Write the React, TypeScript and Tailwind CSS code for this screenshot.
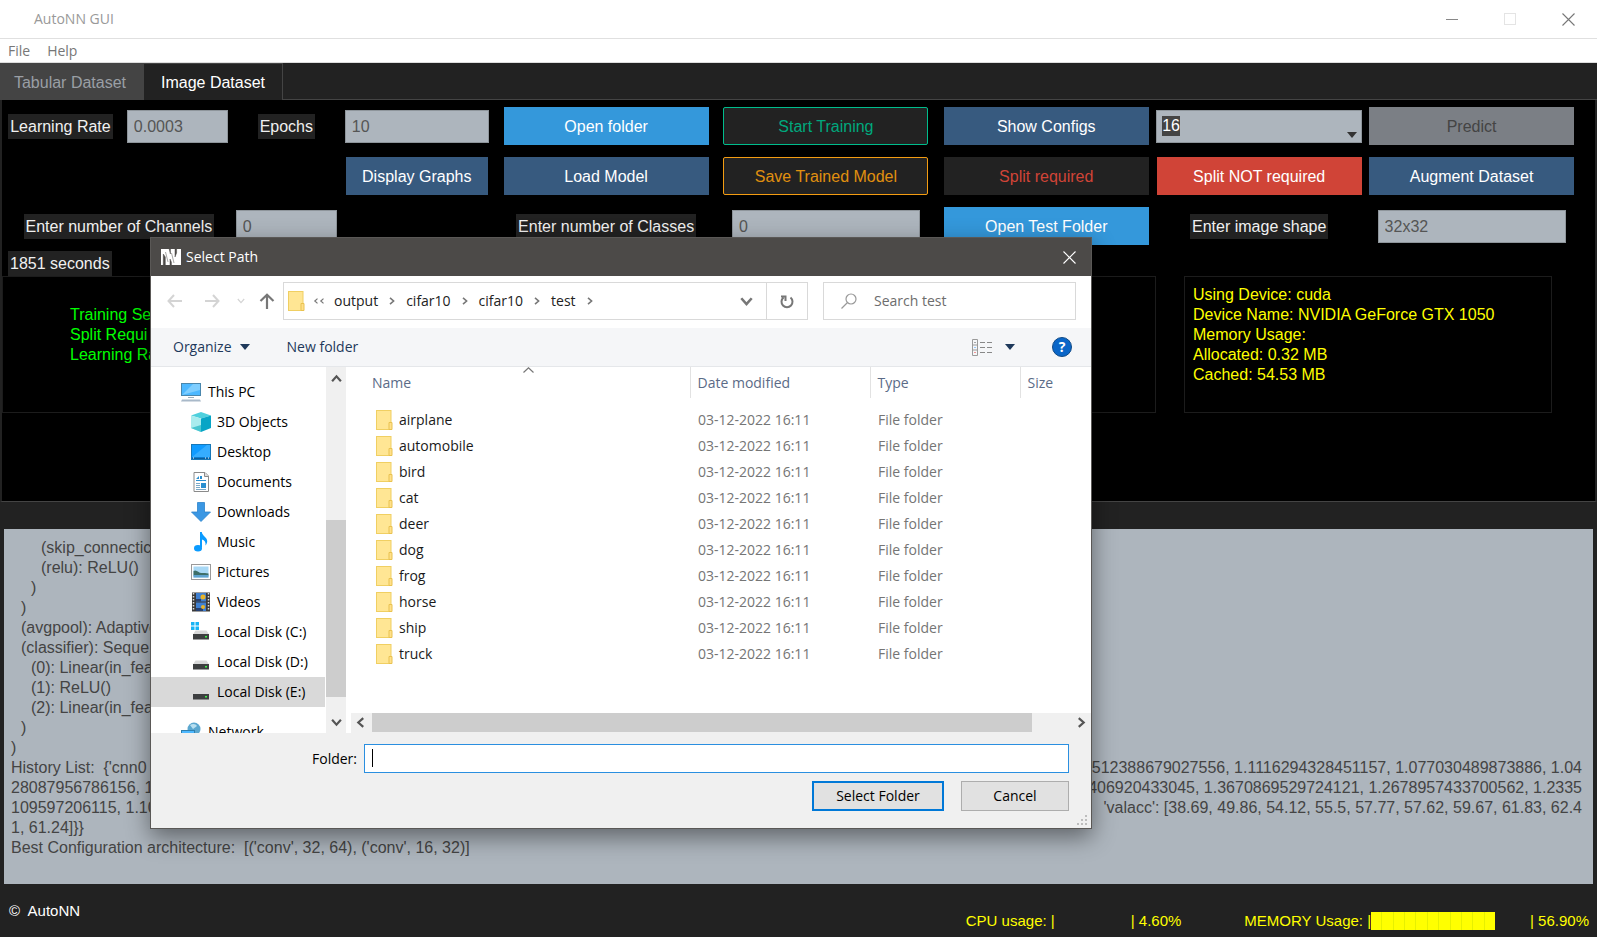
import React from "react";

const FOLDERS = ["airplane", "automobile", "bird", "cat", "deer", "dog", "frog", "horse", "ship", "truck"];

const btn = "h-[38px] w-[205px] pt-0.5 text-base";
const field = "h-[33px] border border-[#8e959b] bg-[#adb5bd] px-1.5 pt-0.5 text-base text-[#555] outline-none";
const tag = "h-[25px] bg-[#222] px-0.5 text-base leading-[25px] whitespace-nowrap text-[#f0f0f0]";

function Chevron({ dir, size = 10, color = "#555", weight = 2 }: { dir: "up" | "down" | "left" | "right"; size?: number; color?: string; weight?: number }) {
  const d = {
    up: "M1 7.5 L5 3 L9 7.5",
    down: "M1 2.5 L5 7 L9 2.5",
    left: "M7.5 1 L3 5 L7.5 9",
    right: "M2.5 1 L7 5 L2.5 9",
  }[dir];
  return (
    <svg className="shrink-0" width={size} height={size} viewBox="0 0 10 10" fill="none" stroke={color} strokeWidth={weight}>
      <path d={d} />
    </svg>
  );
}

function Triangle({ color }: { color: string }) {
  return (
    <svg width="10" height="6" viewBox="0 0 10 6" fill={color}>
      <path d="M0 0H10L5 6Z" />
    </svg>
  );
}

function CloseIcon({ color }: { color: string }) {
  return (
    <svg width="13" height="13" viewBox="0 0 13 13" stroke={color} strokeWidth="1.1">
      <path d="M.5 .5L12.5 12.5M12.5 .5L.5 12.5" />
    </svg>
  );
}

function FolderIcon() {
  return (
    <svg className="shrink-0" width="17" height="20" viewBox="0 0 17 20">
      <rect x=".5" y=".5" width="14.5" height="19" fill="#ffe694" stroke="#f0cf62" />
      <path d="M13 12.5h3v7h-3z" fill="#ffe08a" stroke="#e9c250" />
    </svg>
  );
}

function SideIcon({ name }: { name: string }) {
  switch (name) {
    case "pc":
      return (
        <svg className="shrink-0" width="20" height="20" viewBox="0 0 20 20">
          <rect x=".5" y="1.5" width="19" height="12" fill="#4db8ff" stroke="#4a87ad" />
          <path d="M1 13L12 2h7v6z" fill="#7fceff" />
          <path d="M7 15h6v1H7z" fill="#9aaebb" />
          <path d="M1 17.5h18l1 2H0z" fill="#a9b9c9" />
        </svg>
      );
    case "3d":
      return (
        <svg className="shrink-0" width="20" height="20" viewBox="0 0 20 20">
          <path d="M10 0L20 3.5L10 6.5L0 3.5Z" fill="#4fd0dd" />
          <path d="M0 3.5L10 6.5V20L0 16Z" fill="#a9ecee" />
          <path d="M20 3.5L10 6.5V20L20 16Z" fill="#08a5c6" />
          <path d="M0 16L10 13V20Z" fill="#49c6d0" />
        </svg>
      );
    case "desktop":
      return (
        <svg className="shrink-0" width="20" height="20" viewBox="0 0 20 20">
          <rect x=".5" y="2.5" width="19" height="15" fill="#0f9bff" stroke="#1778b8" />
          <path d="M1 15L16 3h3v12z" fill="#35adff" />
          <path d="M1 15.5h18v1.5H1z" fill="#0a5f9e" />
          <path d="M2 16h1M14 16h1M17 16h1" stroke="#fff" />
        </svg>
      );
    case "documents":
      return (
        <svg className="shrink-0" width="20" height="20" viewBox="0 0 20 20">
          <path d="M3 .5h11l3.500 3.500v15.500H3z" fill="#fff" stroke="#8a8a8a" />
          <path d="M13.500 .5v4h4" fill="#ddd" stroke="#8a8a8a" />
          <path d="M5 7l3-3v3zM9 4h2v3H9zM5 8h10v1H5zM10 11h5v5h-5z" fill="#2a8fd0" />
          <path d="M5 11.500h4M5 13.500h4M5 15.500h4M5 17.500h10" stroke="#7aa9c8" />
        </svg>
      );
    case "downloads":
      return (
        <svg className="shrink-0" width="20" height="20" viewBox="0 0 20 20">
          <path d="M6.500 .5h7v9.500h6L10 19.500L.5 10h6z" fill="#3b97e3" stroke="#2c83cc" strokeWidth=".8" />
        </svg>
      );
    case "music":
      return (
        <svg className="shrink-0" width="20" height="20" viewBox="0 0 20 20" fill="#0a9bff">
          <path d="M9 0h1.800c.4 4 5.700 5.200 5.400 9.500-.1 1.900-.9 3.100-1.700 4 .5-3.500-.9-5.500-3.500-6V15.500H9z" />
          <ellipse cx="7" cy="16.300" rx="4" ry="3.300" />
        </svg>
      );
    case "pictures":
      return (
        <svg className="shrink-0" width="20" height="20" viewBox="0 0 20 20">
          <rect x=".5" y="2.500" width="19" height="15" fill="#fff" stroke="#9a9a9a" />
          <rect x="2.500" y="4.500" width="15" height="11" fill="#a8d8f5" />
          <path d="M2.500 9c3-2 5 2 8 2s4 0 7 .5v2H2.500z" fill="#3e6f68" />
          <path d="M2.500 13h15v2.500h-15z" fill="#5fa3cf" />
        </svg>
      );
    case "videos":
      return (
        <svg className="shrink-0" width="20" height="20" viewBox="0 0 20 20">
          <rect x="1" y=".5" width="18" height="19" fill="#3a3a3a" />
          <path d="M2.500 1v18M17.500 1v18" stroke="#ddd" strokeWidth="1.500" strokeDasharray="1.500 1.500" />
          <rect x="5" y="1" width="10" height="8.500" fill="#3f7fd0" />
          <rect x="5" y="10.500" width="10" height="8.500" fill="#3f7fd0" />
          <path d="M5 7h5v2.500H5zM5 16h7v3H5z" fill="#27406e" />
          <circle cx="12" cy="5" r="2.500" fill="#e9b429" />
          <circle cx="12" cy="15" r="2" fill="#e9b429" />
        </svg>
      );
    case "network":
      return (
        <svg className="shrink-0" width="20" height="20" viewBox="0 0 20 20">
          <circle cx="13" cy="7" r="6.500" fill="#5ba7cf" />
          <path d="M9 3c3-2 6-1 7 1l-4 3z" fill="#b8dff0" />
          <rect x=".5" y="8.500" width="13" height="9" fill="#4db8ff" stroke="#2f7fae" />
        </svg>
      );
    default:
      return (
        <svg className="shrink-0" width="20" height="20" viewBox="0 0 20 20">
          {name === "disk-c" && <path d="M0 0h3.500v3.500H0zM4.500 0h3.500v3.500H4.500zM0 4.500h3.500v3.500H0zM4.500 4.500h3.500v3.500H4.500z" fill="#18b4f5" />}
          <path d="M4.500 8.500h11L18 12.500H2z" fill="#d9d9d9" />
          <rect x="2" y="12" width="16" height="5.500" fill="#3d3f40" />
          <rect x="14" y="14" width="2" height="1.500" fill="#3df04a" />
        </svg>
      );
  }
}

const PLACES = [
  ["3d", "3D Objects"],
  ["desktop", "Desktop"],
  ["documents", "Documents"],
  ["downloads", "Downloads"],
  ["music", "Music"],
  ["pictures", "Pictures"],
  ["videos", "Videos"],
  ["disk-c", "Local Disk (C:)"],
  ["disk", "Local Disk (D:)"],
  ["disk", "Local Disk (E:)"],
];

function Controls() {
  return (
    <div className="mr-[14px] grid auto-rows-[50px] grid-cols-[117fr_117fr_101fr_160fr_219fr_221fr_220fr_205fr_219fr] place-items-center">
      <label htmlFor="lr" className={tag}>Learning Rate</label>
      <input id="lr" defaultValue="0.0003" className={`${field} w-[101px]`} />
      <label htmlFor="epochs" className={tag}>Epochs</label>
      <input id="epochs" defaultValue="10" className={`${field} w-36`} />
      <button className={`${btn} bg-[#3498db] text-white`}>Open folder</button>
      <button className={`${btn} rounded-xs border border-[#00bc8c] bg-[#222] text-[#00a87d]`}>Start Training</button>
      <button className={`${btn} bg-[#375a7f] text-white`}>Show Configs</button>
      <div className="relative flex h-[33px] w-[206px] items-center border border-[#8e959b] bg-[#adb5bd] px-[5px]">
        <select aria-label="Batch size" className="h-5 w-[18px] appearance-none bg-[#444] text-base leading-5 text-white outline-none">
          <option>16</option>
        </select>
        <span className="pointer-events-none absolute right-1 bottom-1">
          <Triangle color="#333" />
        </span>
      </div>
      <button className={`${btn} bg-[#7b7f85] text-[#444]`}>Predict</button>

      <button className="col-start-4 h-[38px] w-[142px] bg-[#375a7f] pt-0.5 text-base text-white">Display Graphs</button>
      <button className={`${btn} bg-[#375a7f] text-white`}>Load Model</button>
      <button className={`${btn} rounded-xs border border-[#f39c12] bg-[#222] text-[#e0900f]`}>Save Trained Model</button>
      <button className={`${btn} bg-[#222] text-[#d04437]`}>Split required</button>
      <button className={`${btn} bg-[#d04437] text-white`}>Split NOT required</button>
      <button className={`${btn} bg-[#375a7f] text-white`}>Augment Dataset</button>

      <label htmlFor="channels" className={`${tag} col-span-2`}>Enter number of Channels</label>
      <input id="channels" defaultValue="0" className={`${field} w-[101px]`} />
      <label htmlFor="classes" className={`${tag} col-start-5`}>Enter number of Classes</label>
      <input id="classes" defaultValue="0" className={`${field} w-[188px]`} />
      <button className={`${btn} bg-[#3498db] text-white`}>Open Test Folder</button>
      <label htmlFor="shape" className={tag}>Enter image shape</label>
      <input id="shape" defaultValue="32x32" className={`${field} w-[188px]`} />
    </div>
  );
}

function LogRow({ start, end }: { start: string; end: string }) {
  return (
    <div className="flex justify-between whitespace-pre">
      <span>{start}</span>
      <span>{end}</span>
    </div>
  );
}

function Crumb({ children }: { children: React.ReactNode }) {
  return (
    <>
      <button className="text-[#222]">{children}</button>
      <Chevron dir="right" size={8} color="#777" />
    </>
  );
}

function PathDialog() {
  return (
    <div role="dialog" aria-label="Select Path" className="absolute top-[237px] left-[150px] w-[942px] border border-[#5a5856] bg-white font-['Open_Sans','Noto_Sans',sans-serif] text-sm text-black shadow-[0_8px_22px_rgba(0,0,0,0.45)]">
      <div className="flex h-[38px] items-center bg-[#4c4a48] pr-[15px] pl-2.5 text-white">
        <svg width="20" height="16" viewBox="0 0 20 16">
          <path d="M0 0H20V16H0Z" fill="#fff" />
          <path d="M2.300 5V16H4.300V8ZM8.200 0L9.400 5V0ZM9 10V16H10.400V13ZM14 0V8L15.600 4V0ZM4.500 3L7 13M10.500 4L13 14" fill="#4c4a48" stroke="#4c4a48" strokeWidth=".5" />
        </svg>
        <span className="ml-[5px] grow">Select Path</span>
        <button aria-label="Close">
          <CloseIcon color="#fff" />
        </button>
      </div>

      <div className="flex h-[52px] items-center pr-[15px] pb-0.5 pl-4">
        <svg className="shrink-0" width="16" height="14" viewBox="0 0 16 14" fill="none" stroke="#d4d4d4" strokeWidth="2">
          <path d="M7 1L1.500 7L7 13M1.500 7H15" />
        </svg>
        <svg className="ml-[21px] shrink-0" width="16" height="14" viewBox="0 0 16 14" fill="none" stroke="#d4d4d4" strokeWidth="2">
          <path d="M9 1L14.500 7L9 13M14.500 7H1" />
        </svg>
        <span className="ml-[17px]">
          <Chevron dir="down" size={8} color="#d4d4d4" weight={1.5} />
        </span>
        <svg className="ml-[14px] shrink-0" width="16" height="16" viewBox="0 0 16 16" fill="none" stroke="#777" strokeWidth="2.200">
          <path d="M1.500 8L8 1.800L14.500 8M8 2V16" />
        </svg>
        <div className="ml-2 flex h-[38px] w-[525px] shrink-0 items-center border border-[#d9d9d9] pl-1">
          <FolderIcon />
          <span className="ml-2 flex">
            <Chevron dir="left" size={6} color="#777" />
            <Chevron dir="left" size={6} color="#777" />
          </span>
          <div className="ml-[9px] flex grow items-center gap-2.5">
            <Crumb>output</Crumb>
            <Crumb>cifar10</Crumb>
            <Crumb>cifar10</Crumb>
            <Crumb>test</Crumb>
          </div>
          <Chevron dir="down" size={13} color="#777" weight={2} />
          <button aria-label="Refresh" className="ml-[13px] flex h-9 w-[41px] items-center justify-center border-l border-[#d9d9d9]">
            <svg width="14" height="15" viewBox="0 0 14 15" fill="none" stroke="#777" strokeWidth="2">
              <path d="M10.500 3.500A5.500 5.500 0 1 1 3.500 3.500M1 2.500H5.500V7" />
            </svg>
          </button>
        </div>
        <div className="ml-[15px] flex h-[38px] min-w-0 grow items-center border border-[#d9d9d9] pl-[17px]">
          <svg className="shrink-0" width="16" height="16" viewBox="0 0 16 16" fill="none" stroke="#999" strokeWidth="1.200">
            <circle cx="10" cy="6" r="5" />
            <path d="M6.500 9.500L.5 15.500" />
          </svg>
          <input aria-label="Search test" placeholder="Search test" className="ml-[17px] w-36 outline-none placeholder:text-[#6d6d6d]" />
        </div>
      </div>

      <div className="flex h-[39px] items-center border-b border-[#e5e7ea] bg-[#f5f6f8] pr-[19px] pl-[22px] text-[#1e395b]">
        <button className="flex items-center gap-2">
          Organize <Triangle color="#1e395b" />
        </button>
        <button className="ml-[37px]">New folder</button>
        <span className="grow" />
        <svg width="21" height="17" viewBox="0 0 21 17" fill="none">
          <path d="M.5 .5h5v16h-5zM.5 6h5M.5 11h5" stroke="#9a9a9a" />
          <path d="M8 3.500h5M15 3.500h5M8 8.500h5M15 8.500h5M8 13.500h5M15 13.500h5" stroke="#888" />
          <path d="M2.500 3.500h1" stroke="#555" />
          <path d="M2.500 8.500h1" stroke="#39f" />
          <path d="M2.500 13.500h1" stroke="#e33" />
        </svg>
        <span className="ml-3">
          <Triangle color="#1e395b" />
        </span>
        <button aria-label="Help" className="ml-[37px] flex size-5 items-center justify-center rounded-full border border-[#114a86] bg-[#0a66c8] font-bold text-white">?</button>
      </div>

      <div className="flex h-[366px]">
        <nav aria-label="Places" className="w-[175px] shrink-0 overflow-hidden pt-2.5">
          <button className="flex h-[30px] w-[174px] items-center gap-[7px] pl-[30px] text-left">
            <SideIcon name="pc" /> This PC
          </button>
          {PLACES.map(([icon, label]) => (
            <button
              key={label}
              className={`flex h-[30px] w-[174px] items-center gap-1.5 pl-10 text-left whitespace-nowrap ${label.includes("(E:)") ? "bg-[#d9d9d9]" : ""}`}
            >
              <SideIcon name={icon} /> {label}
            </button>
          ))}
          <button className="mt-2.5 flex h-[30px] w-[174px] items-center gap-[7px] pl-[30px] text-left">
            <SideIcon name="network" /> Network
          </button>
        </nav>
        <div className="flex w-5 shrink-0 flex-col items-center bg-[#f0f0f0]">
          <span className="flex h-[22px] items-center">
            <Chevron dir="up" size={11} />
          </span>
          <span className="mt-[131px] h-[177px] w-full bg-[#cdcdcd]" />
          <span className="mt-auto flex h-[22px] items-center">
            <Chevron dir="down" size={11} />
          </span>
        </div>
        <div className="relative flex min-w-0 grow flex-col">
          <table className="w-full table-fixed text-left">
            <colgroup>
              <col className="w-[344px]" />
              <col className="w-[180px]" />
              <col className="w-[150px]" />
              <col />
            </colgroup>
            <thead className="text-[#5b6b87]">
              <tr className="h-[31px]">
                <th className="pl-[26px] font-normal">Name</th>
                <th className="border-l border-[#e2e2e2] pl-[7px] font-normal">Date modified</th>
                <th className="border-l border-[#e2e2e2] pl-[7px] font-normal">Type</th>
                <th className="border-l border-[#e2e2e2] pl-[7px] font-normal">Size</th>
              </tr>
            </thead>
            <tbody className="text-[#757575] before:block before:h-[9px] before:content-['']">
              {FOLDERS.map((name) => (
                <tr key={name} className="h-[26px]">
                  <td className="p-0 pl-[30px] text-[#1a1a1a]">
                    <span className="flex items-center gap-1.5">
                      <FolderIcon /> {name}
                    </span>
                  </td>
                  <td className="p-0 pl-2">03-12-2022 16:11</td>
                  <td className="p-0 pl-2">File folder</td>
                  <td />
                </tr>
              ))}
            </tbody>
          </table>
          <span className="absolute top-0 left-[177px]">
            <svg width="11" height="6" viewBox="0 0 11 6" fill="none" stroke="#777" strokeWidth="1.200">
              <path d="M.5 5.500L5.500 .8L10.500 5.500" />
            </svg>
          </span>
          <div className="mt-auto ml-[5px] flex h-5 items-start bg-[#f0f0f0]">
            <span className="flex h-[19px] w-[21px] shrink-0 items-center pl-1">
              <Chevron dir="left" size={11} />
            </span>
            <span className="h-[19px] w-[660px] bg-[#cdcdcd]" />
            <span className="ml-auto flex h-[19px] items-center pr-1">
              <Chevron dir="right" size={11} />
            </span>
          </div>
        </div>
      </div>

      <div className="bg-[#f0f0f0] pt-[11px] pr-[22px] pb-[17px] text-black">
        <div className="flex items-center justify-end gap-[7px]">
          <label htmlFor="folder">Folder:</label>
          <div className="relative w-[705px]">
            <input id="folder" className="block h-[29px] w-full border border-[#2a8fe0] bg-white px-2 outline-none" />
            <span className="absolute top-[5px] left-2 h-[18px] w-px bg-black" />
          </div>
        </div>
        <div className="mt-2 flex justify-end gap-[17px]">
          <button className="h-[30px] w-[132px] border-2 border-[#0078d7] bg-[#e1e1e1]">Select Folder</button>
          <button className="h-[30px] w-[108px] border border-[#adadad] bg-[#e1e1e1]">Cancel</button>
        </div>
      </div>
      <svg className="absolute right-[3px] bottom-[2px]" width="11" height="11" viewBox="0 0 11 11" fill="#bdbdbd">
        <path d="M8 0h2v2H8zM4 4h2v2H4zM8 4h2v2H8zM0 8h2v2H0zM4 8h2v2H4zM8 8h2v2H8z" />
      </svg>
    </div>
  );
}

export default function App() {
  return (
    <div className="relative flex min-h-screen flex-col bg-[#222] font-['Liberation_Sans',Arial,sans-serif] text-base leading-5">
      <header className="flex h-[39px] items-center border-b border-[#e0e0e0] bg-white pr-[22px] pl-[34px] font-['Open_Sans','Noto_Sans',sans-serif] text-sm text-[#999]">
        <span className="grow">AutoNN GUI</span>
        <div className="flex items-center gap-[46px]">
          <button aria-label="Minimize" className="h-px w-3 bg-[#888]" />
          <button aria-label="Maximize" className="size-3 border border-[#e4e4e4]" />
          <button aria-label="Close">
            <CloseIcon color="#777" />
          </button>
        </div>
      </header>
      <nav aria-label="Menu" className="flex h-6 items-center gap-[17px] border-b border-[#ddd] bg-white pl-2 font-['Open_Sans','Noto_Sans',sans-serif] text-sm text-[#777]">
        <button>File</button>
        <button>Help</button>
      </nav>
      <div role="tablist" className="flex h-[37px] border-b border-[#444] pr-px">
        <button role="tab" aria-selected="false" className="w-36 bg-[#444] pt-1 pr-1 text-[#9a9fa5]">Tabular Dataset</button>
        <button role="tab" aria-selected="true" className="-mb-px w-[139px] border-t border-r border-[#444] bg-[#222] pt-0.5 text-white">Image Dataset</button>
      </div>

      <section className="border-x-2 border-b border-x-[#222] border-b-[#444] bg-black pt-px pb-[88px]">
        <Controls />
        <div className="ml-1.5 flex">
          <span className={tag}>1851 seconds</span>
        </div>
        <div className="mr-[43px] flex gap-7">
          <div className="h-[137px] grow border border-[#1c1c1c] pt-7 pl-[67px] leading-5 text-[#00ff00]">
            <p>Training Se</p>
            <p>Split Requi</p>
            <p>Learning Ra</p>
          </div>
          <div className="h-[137px] w-[368px] border border-[#1c1c1c] pt-2 pl-2 leading-5 text-[#ffff00]">
            <p>Using Device: cuda</p>
            <p>Device Name: NVIDIA GeForce GTX 1050</p>
            <p>Memory Usage:</p>
            <p>Allocated: 0.32 MB</p>
            <p>Cached: 54.53 MB</p>
          </div>
        </div>
      </section>

      <main className="mx-1 mt-[27px] grow bg-[#adb5bd] pt-[9px] pr-[11px] pb-2 pl-[7px] text-[#444]">
        <p className="pl-[30px]">(skip_connectic</p>
        <p className="pl-[30px]">(relu): ReLU()</p>
        <p className="pl-5">)</p>
        <p className="pl-2.5">)</p>
        <p className="pl-2.5">(avgpool): Adaptive</p>
        <p className="pl-2.5">(classifier): Seque</p>
        <p className="pl-5">(0): Linear(in_fea</p>
        <p className="pl-5">(1): ReLU()</p>
        <p className="pl-5">(2): Linear(in_fea</p>
        <p className="pl-2.5">)</p>
        <p>)</p>
        <LogRow start="History List:  {'cnn0" end="512388679027556, 1.1116294328451157, 1.077030489873886, 1.04" />
        <LogRow start="28087956786156, 1" end="406920433045, 1.3670869529724121, 1.2678957433700562, 1.2335" />
        <LogRow start="109597206115, 1.10" end="'valacc': [38.69, 49.86, 54.12, 55.5, 57.77, 57.62, 59.67, 61.83, 62.4" />
        <p>{"1, 61.24]}}"}</p>
        <p className="whitespace-pre">{"Best Configuration architecture:  [('conv', 32, 64), ('conv', 16, 32)]"}</p>
      </main>

      <footer className="flex h-[53px] items-center justify-between pr-2 pl-[9px] text-[15px]">
        <span className="text-white">©&nbsp; AutoNN</span>
        <div className="flex items-center pt-5 leading-5 whitespace-nowrap text-[#ffff00]">
          <span>CPU usage: |</span>
          <span className="ml-[76px]">| 4.60%</span>
          <span className="ml-[63px]">MEMORY Usage: |</span>
          <span className="flex h-[18px] w-[124px] divide-x divide-[#e6f000] bg-[#ffff00]">
            {Array.from({ length: 11 }, (_, i) => (
              <span key={i} className="grow" />
            ))}
          </span>
          <span className="ml-[35px]">| 56.90%</span>
        </div>
      </footer>
      <PathDialog />
    </div>
  );
}
